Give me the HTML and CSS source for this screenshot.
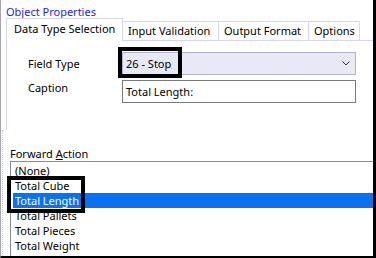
FILE: index.html
```html
<!DOCTYPE html>
<html lang="en">
<head>
  <meta charset="UTF-8">
  <meta name="viewport" content="width=device-width, initial-scale=1.0">
  <title>Object Properties</title>
  <link rel="stylesheet" href="styles.css">
</head>
<body>

  <div class="window">
    <div class="group-title">Object Properties</div>

    <div class="tabs">
      <div class="tab active">Data Type Selection</div>
      <div class="tab tab-input">Input Validation</div>
      <div class="tab tab-output">Output Format</div>
      <div class="tab tab-options">Options</div>
      <div class="tab-fill"></div>
    </div>

    <div class="page">
      <div class="row">
        <label>Field Type</label>
        <div class="combo">
          <span>26 - Stop</span>
          <svg class="chevron" width="8" height="5" viewBox="0 0 8 5">
            <polyline points="0.5,0.5 4,4 7.5,0.5" fill="none" stroke="#3a3a3a" stroke-width="1"/>
          </svg>
        </div>
      </div>
      <div class="row">
        <label class="top">Caption</label>
        <div class="textbox">Total Length:</div>
      </div>
    </div>

    <div class="lower">
      <div class="list-label">Forward <u>A</u>ction</div>
      <ul class="list">
        <li>(None)</li>
        <li>Total Cube</li>
        <li class="selected">Total Length</li>
        <li>Total Pallets</li>
        <li>Total Pieces</li>
        <li>Total Weight</li>
      </ul>
    </div>

    <!-- callout boxes drawn over the dialog -->
    <div class="mark mark-combo"></div>
    <div class="mark mark-list"></div>
  </div>

</body>
</html>
```

FILE: styles.css
```css
body {
  margin: 0;
  font-family: "Noto Sans", "Segoe UI", sans-serif;
  font-size: 11px;
  color: #000;
  background: #fff;
}

.window {
  position: relative;
  box-sizing: border-box;
  width: 376px;
  height: 258px;
  border-left: 1px solid #a4a4b8;
  border-right: 3px solid #000;
  border-bottom: 2px solid #000;
  overflow: hidden;
}

.group-title {
  height: 13px;
  line-height: 13px;
  padding: 5px 0 0 5px;
  color: #1c1ce6;
}

/* tab strip */
.tabs {
  display: flex;
  align-items: flex-end;
  height: 23px;
  margin-left: 5px;
}

.tab {
  box-sizing: border-box;
  height: 20px;
  line-height: 15px;
  padding: 1px 0 0 5px;
  border-top: 1px solid #d6d6f2;
  border-right: 1px solid #d6d6f2;
  border-bottom: 1px solid #d6d6f2;
  white-space: nowrap;
}

.tab.active {
  width: 117px;
  height: 23px;
  padding: 2px 0 0 7px;
  border: 1px solid #d6d6f2;
  border-bottom: none;
}

.tab-input { width: 96px; }
.tab-output { width: 90px; }
.tab-options { width: 51px; }

.tab-fill {
  flex: 1;
  border-bottom: 1px solid #d6d6f2;
}

/* page body */
.page {
  box-sizing: border-box;
  height: 89px;
  margin-left: 5px;
  padding-top: 11px;
  border-left: 1px solid #d6d6f2;
}

.row {
  display: flex;
  align-items: center;
  height: 23px;
  margin-bottom: 5px;
}

.row label {
  box-sizing: border-box;
  width: 115px;
  padding-left: 21px;
  line-height: 15px;
}

.row label.top {
  align-self: flex-start;
}

.combo {
  box-sizing: border-box;
  display: flex;
  align-items: center;
  justify-content: space-between;
  width: 234px;
  height: 23px;
  padding: 0 5px 0 3px;
  border: 1px solid #b2b2cc;
  background-color: #e8e8f6;
}

.chevron {
  display: block;
}

.textbox {
  box-sizing: border-box;
  display: flex;
  align-items: center;
  width: 234px;
  height: 23px;
  padding-left: 3px;
  border: 1px solid #7a7a7a;
}

/* list section */
.lower {
  height: 126px;
  margin-left: 1px;
  padding-top: 16px;
  box-sizing: border-box;
  border-left: 1px dotted #c6c6ea;
}

.list-label {
  height: 15px;
  line-height: 15px;
  padding-left: 7px;
}

.list {
  list-style: none;
  margin: 0 0 0 7px;
  padding: 1px 0 0 0;
  border-top: 1px solid #868c9c;
  border-left: 1px solid #868c9c;
  height: 200px;
}

.list li {
  height: 15px;
  line-height: 15px;
  margin-left: 2px;
  padding-left: 2px;
}

.list li.selected {
  background-color: #0a72f2;
  color: #fff;
}

.mark {
  position: absolute;
  box-sizing: border-box;
  border: 4px solid #000;
}

.mark-combo {
  left: 117px;
  top: 47px;
  width: 64px;
  height: 31px;
}

.mark-list {
  left: 6px;
  top: 176px;
  width: 78px;
  height: 37px;
}
```
